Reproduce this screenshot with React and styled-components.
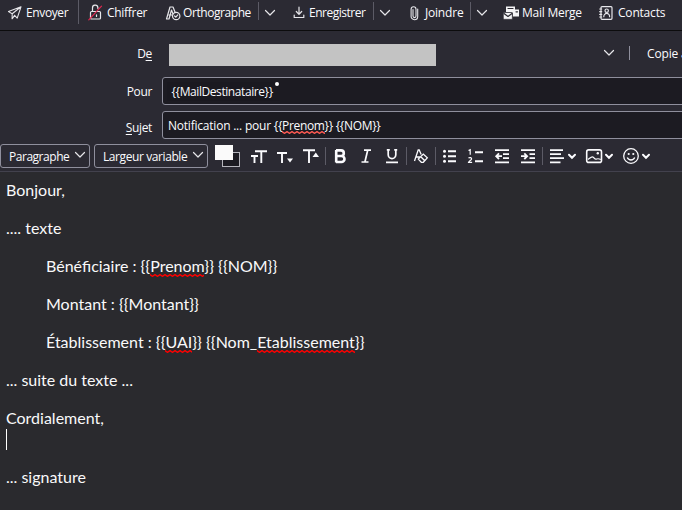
import React from "react";
import styled, { createGlobalStyle } from "styled-components";

const Global = createGlobalStyle`
  * { box-sizing: border-box; }
  body { margin: 0; overflow: hidden; background: #2a2a2e; }
`;

const Window = styled.div`
  width: 682px;
  height: 510px;
  overflow: hidden;
  display: flex;
  flex-direction: column;
  background: #2b2a33;
  color: #fbfbfe;
  font: 12px/16px "Open Sans", "Noto Sans", sans-serif;
  white-space: nowrap;
`;

const Toolbar = styled.div`
  height: 31px;
  flex: none;
  display: flex;
  align-items: flex-start;
  border-bottom: 1px solid #0c0c0d;
`;

const ToolButton = styled.div`
  flex: none;
  width: ${(p) => p.$w}px;
  height: 26px;
  padding-left: ${(p) => p.$pad}px;
  display: flex;
  align-items: center;
  gap: ${(p) => p.$gap || 4}px;
`;

const Label = styled.span`
  letter-spacing: ${(p) => p.$ls || 0}px;
`;

const Divider = styled.span`
  flex: none;
  width: 1px;
  height: ${(p) => p.$h}px;
  margin-top: ${(p) => p.$top || 0}px;
  background: ${(p) => p.$c || "#5c5b66"};
`;

const Glyph = styled.svg`
  flex: none;
  display: block;
  fill: none;
  stroke: #e6e6ea;
  stroke-width: 1.2;
  stroke-linecap: round;
  stroke-linejoin: round;
`;

const Headers = styled.div`
  height: 108px;
  flex: none;
  display: flex;
  flex-direction: column;
`;

const FieldRow = styled.div`
  display: flex;
  height: ${(p) => p.$h}px;
  align-items: flex-start;
`;

const FieldLabel = styled.div`
  width: 152px;
  flex: none;
  padding-top: ${(p) => p.$top}px;
  text-align: right;
  letter-spacing: -0.35px;
  u { text-underline-offset: 2px; }
`;

const Sender = styled.div`
  width: 267px;
  height: 22px;
  margin: 13px 167px 0 17px;
  flex: none;
  background: #c3c3c3;
`;

const SenderMenu = styled.div`
  flex: none;
  width: 26px;
  padding-top: 18px;
`;

const CopyLink = styled.div`
  flex: none;
  padding: 15px 0 0 17px;
  letter-spacing: -0.15px;
`;

const Field = styled.div`
  flex: none;
  width: 530px;
  height: 28px;
  margin-left: 10px;
  padding: ${(p) => p.$drop || 0}px 0 0 ${(p) => p.$pad}px;
  display: flex;
  align-items: center;
  background: #1c1b22;
  border: 1px solid #8f8f9d;
  border-radius: 3px;
`;

const Pill = styled.div`
  position: relative;
  width: 113px;
  height: 19px;
  padding-left: 4.5px;
  line-height: 19px;
  background: #1a1920;
  border-radius: 2px;
`;

const Dot = styled.i`
  position: absolute;
  right: 1px;
  top: 0;
  width: 4px;
  height: 4px;
  border-radius: 50%;
  background: #fff;
`;

const Misspelled = styled.span`
  padding-bottom: ${(p) => p.$drop || 0}px;
  background: url("data:image/svg+xml,%3Csvg xmlns='http://www.w3.org/2000/svg' width='5' height='3'%3E%3Cpath d='M-1 .1L0 .6L2.5 2.3L5 .6L6 .1' fill='none' stroke='${(p) => p.$c || "red"}' stroke-width='1.4'/%3E%3C/svg%3E") 0 100% / 5px 3px repeat-x;
`;

const FormatBar = styled.div`
  height: 33px;
  flex: none;
  display: flex;
  align-items: flex-start;
  padding-top: 5px;
  border-bottom: 1px solid #42414d;
`;

const Select = styled.div`
  flex: none;
  width: ${(p) => p.$w}px;
  height: 24px;
  margin-right: 4px;
  padding: 1px 3px 0 8px;
  display: flex;
  align-items: center;
  justify-content: space-between;
  border: 1px solid #8f8f9d;
  border-radius: 3px;
  svg { margin-bottom: 3px; }
`;

const FormatIcons = styled.svg`
  flex: none;
  display: block;
  width: 470px;
  height: 24px;
  margin-left: 2px;
`;

const Editor = styled.div`
  flex: 1;
  padding: 8px 6px;
  background: #2a2a2e;
  color: #f9f9fa;
  font: 16px/19px Lato, "Open Sans", sans-serif;
`;

const Paragraph = styled.p`
  margin: 0 0 19px ${(p) => (p.$indent ? 40 : 0)}px;
`;

const CaretLine = styled.div`
  height: 21px;
  margin: -17px 0 17px;
  border-left: 1px solid #fff;
`;

const Chevron = () => (
  <Glyph width="12" height="8" viewBox="0 0 12 8">
    <path d="M1.5 1.5L6 6l4.5-4.5" />
  </Glyph>
);

const SendIcon = () => (
  <Glyph width="16" height="16" viewBox="0 0 16 16">
    <path d="M14 1.8L1.5 6.6l3.7 2.2L14 1.8l-3.8 11.4-2.6-2.8M5.2 8.8l-.1 5 2.5-3.4" strokeWidth="1.1" />
  </Glyph>
);

const LockIcon = () => (
  <Glyph width="16" height="18" viewBox="0 0 16 18">
    <rect x="2.5" y="7.5" width="10" height="7.5" rx="1" />
    <path d="M4.5 7.5V4.2a2.7 2.7 0 0 1 5.4-.6v1M8.5 10.8v1.6" />
    <path d="M.8 15.8L13.5 2.2" stroke="#e22850" />
  </Glyph>
);

const SpellIcon = () => (
  <Glyph width="16" height="16" viewBox="0 0 16 16">
    <path d="M1.5 14L5 2h3l2 5M4 14l2.5-9L8 9M4 10h3M1.5 14H4" />
    <circle cx="11.2" cy="11" r="3.7" />
    <path d="M9.6 11l1.2 1.2 2-2.3" />
  </Glyph>
);

const SaveIcon = () => (
  <Glyph width="12" height="14" viewBox="0 0 12 14">
    <path d="M6 1.2V8M3.3 5.5L6 8.3l2.7-2.8M1.2 9v2.5h9.6V9" />
  </Glyph>
);

const ClipIcon = () => (
  <Glyph width="9" height="16" viewBox="0 0 9 16">
    <path d="M3 4.5v6.6a1.5 1.5 0 0 0 3 0V4.2a2.4 2.4 0 0 0-4.9 0v7.2a3.3 3.3 0 0 0 6.6 0V4" strokeWidth="1.1" />
  </Glyph>
);

const MergeIcon = () => (
  <Glyph width="17" height="16" viewBox="0 0 17 16">
    <path d="M3 1.5h9v3h4v7H10V8.5L8 7H3z" fill="#f4f4f6" stroke="none" />
    <path d="M5 3.5h5M13 6.8h1.5" stroke="#2b2a33" />
    <path d="M.5 7.5h8.8v6.8H.5z" fill="#f4f4f6" stroke="#2b2a33" strokeWidth=".6" />
    <path d="M1 8.5l4 3 4-3" stroke="#2b2a33" />
  </Glyph>
);

const ContactsIcon = () => (
  <Glyph width="14" height="16" viewBox="0 0 14 16">
    <rect x="2" y="1.7" width="11" height="12.6" rx="1" />
    <path d="M.7 4h2M.7 6.7h2M.7 9.4h2M.7 12h2" />
    <circle cx="7.7" cy="5.7" r="1.7" />
    <path d="M4.8 11.7c0-2 1.2-3.2 2.9-3.2s2.9 1.2 2.9 3.2M6.8 8l-.2 1M8.7 8l.2 1" />
  </Glyph>
);

const Squiggle = ({ children, color, drop }) => (
  <Misspelled $c={color} $drop={drop}>{children}</Misspelled>
);

const menuChevron = "l3 3 3-3";

/* Formatting icons share one strip that starts just left of the colour swatches. */
const FormatStrip = () => (
  <FormatIcons viewBox="214 144 470 24" fill="none" stroke="#fbfbfe" strokeWidth="1.6">
    <rect x="222.5" y="152.5" width="17" height="14" fill="#1c1b22" stroke="#b5b5bc" strokeWidth="1" />
    <rect x="215" y="145" width="18" height="15" fill="#fafafa" stroke="none" />
    <path d="M255 151.2h12M261.3 151v12M251 156h7M254.5 156v7" strokeWidth="1.9" />
    <path d="M277 153h10M282 153v10" strokeWidth="1.9" />
    <path d="M287 158.5h6l-3 4z" fill="#fbfbfe" stroke="none" />
    <path d="M303 150.2h12M309 150v13" strokeWidth="1.9" />
    <path d="M312.5 157h6.5l-3.2-4.5z" fill="#fbfbfe" stroke="none" />
    <path d="M325.5 147v18M406.5 147v18M435.5 147v18M542.5 147v18" stroke="#5c5b66" strokeWidth="1" />
    <path d="M336 150.4h5a2.6 2.6 0 0 1 0 5.6h-5m0 0h5.5a3 3 0 0 1 0 6H336M336.2 150v12.5" strokeWidth="2.6" />
    <path d="M364 150.2h7M361.5 162h7M367.7 150.2l-2.8 11.8" strokeWidth="1.7" />
    <path d="M388.2 149.5v5.3a3.8 3.8 0 0 0 7.6 0v-5.3M386 162.3h12M386.8 149.8h3M394.2 149.8h3" strokeWidth="1.7" />
    <path d="M414.5 161l3.7-11h1l2 4.5M416 157h4M421.3 162.3l-3-3.2 5-5 4 3.8-4 4.4zM420.8 156.7l4 4" strokeWidth="1.3" />
    <path d="M448 151.2h8M448 156.2h8M448 161.3h8" strokeWidth="1.9" />
    <g fill="#fbfbfe" stroke="none">
      <circle cx="444.5" cy="151.2" r="1.5" />
      <circle cx="444.5" cy="156.2" r="1.5" />
      <circle cx="444.5" cy="161.3" r="1.5" />
    </g>
    <path d="M475 152.2h8M475 161.2h8" strokeWidth="1.9" />
    <path d="M468.5 150.5l1.7-.8v5M468.5 158.2c1-1.2 3.3-.6 3.1.8 0 1-3 2.5-3.1 3.4h3.6" strokeWidth="1.2" />
    <path d="M495 150.2h14M503 154.2h6M503 158.2h6M495 162.3h14M496.5 156.2h5.5M499 153.4l-2.8 2.8 2.8 2.8" strokeWidth="1.8" />
    <path d="M521 150.2h14M529.5 154.2h5.5M529.5 158.2h5.5M521 162.3h14M521 156.2h6M524.3 153.4l2.8 2.8-2.8 2.8" strokeWidth="1.8" />
    <path d="M550 150.2h13M550 154.2h11M550 158.2h14M550 162.3h10.5" strokeWidth="1.8" />
    <path d={`M569 154.8${menuChevron}M606 154.8${menuChevron}M643 154.8${menuChevron}`} strokeWidth="2" strokeLinecap="round" />
    <rect x="586.7" y="149.9" width="14.8" height="12.5" rx="2" />
    <path d="M588 159.5c2-1.5 3-2.6 4.3-2.6s2.2 2.2 3.5 2.2 2-1.2 5 .5" strokeWidth="1.1" />
    <circle cx="597.8" cy="153.2" r="1.2" fill="#fbfbfe" stroke="none" />
    <circle cx="631" cy="156" r="7.3" strokeWidth="1.3" />
    <path d="M627.3 157.6c1.3 3.2 6.1 3.2 7.4 0" strokeWidth="1.3" />
    <circle cx="628.7" cy="154" r="1.1" fill="#fbfbfe" stroke="none" />
    <circle cx="633.3" cy="154" r="1.1" fill="#fbfbfe" stroke="none" />
  </FormatIcons>
);

export default function App() {
  return (
    <>
      <Global />
      <Window>
        <Toolbar>
          <ToolButton $w={78} $pad={7} $gap={3}><SendIcon /><Label $ls={-0.38}>Envoyer</Label></ToolButton>
          <Divider $h={24} />
          <ToolButton $w={86} $pad={9} $gap={3}><LockIcon /><Label $ls={-0.3}>Chiffrer</Label></ToolButton>
          <ToolButton $w={93} $pad={0} $gap={2}><SpellIcon /><Label $ls={-0.43}>Orthographe</Label></ToolButton>
          <Divider $h={18} $top={2} />
          <ToolButton $w={34} $pad={5}><Chevron /></ToolButton>
          <ToolButton $w={80} $pad={0} $gap={4}><SaveIcon /><Label $ls={-0.48}>Enregistrer</Label></ToolButton>
          <Divider $h={18} $top={2} />
          <ToolButton $w={36} $pad={5}><Chevron /></ToolButton>
          <ToolButton $w={60} $pad={0} $gap={6}><ClipIcon /><Label $ls={-0.2}>Joindre</Label></ToolButton>
          <Divider $h={18} $top={2} />
          <ToolButton $w={31} $pad={5}><Chevron /></ToolButton>
          <ToolButton $w={97} $pad={1} $gap={2}><MergeIcon /><Label $ls={-0.25}>Mail Merge</Label></ToolButton>
          <ToolButton $w={83} $pad={0} $gap={5}><ContactsIcon /><Label $ls={-0.2}>Contacts</Label></ToolButton>
        </Toolbar>
        <Headers>
          <FieldRow $h={46}>
            <FieldLabel $top={15}>D<u>e</u></FieldLabel>
            <Sender />
            <SenderMenu><Chevron /></SenderMenu>
            <Divider $h={14} $top={15} $c="#8f8f9d" />
            <CopyLink>Copie à</CopyLink>
          </FieldRow>
          <FieldRow $h={34}>
            <FieldLabel $top={7}>Pour</FieldLabel>
            <Field $pad={4}>
              <Pill><Label $ls={-0.42}>{"{{MailDestinataire}}"}</Label><Dot /></Pill>
            </Field>
          </FieldRow>
          <FieldRow $h={28}>
            <FieldLabel $top={9}><u>S</u>ujet</FieldLabel>
            <Field $pad={5} $drop={2}>
              <Label $ls={-0.22}>Notification ... pour&nbsp;</Label>
              <Label $ls={-0.34}>{"{{"}<Squiggle color="%23ff5a52">Prenom</Squiggle>{"}} {{NOM}}"}</Label>
            </Field>
          </FieldRow>
        </Headers>
        <FormatBar>
          <Select $w={90}><Label $ls={-0.47}>Paragraphe</Label><Chevron /></Select>
          <Select $w={114}><Label $ls={-0.41}>Largeur variable</Label><Chevron /></Select>
          <FormatStrip />
        </FormatBar>
        <Editor>
          <Paragraph>Bonjour,</Paragraph>
          <Paragraph>.... texte</Paragraph>
          <Paragraph $indent>Bénéficiaire : {"{{"}<Squiggle drop={2}>Prenom</Squiggle>{"}} {{NOM}}"}</Paragraph>
          <Paragraph $indent>Montant : {"{{Montant}}"}</Paragraph>
          <Paragraph $indent>Établissement : {"{{"}<Squiggle drop={2}>UAI</Squiggle>{"}} {{Nom_"}<Squiggle drop={2}>Etablissement</Squiggle>{"}}"}</Paragraph>
          <Paragraph>... suite du texte ...</Paragraph>
          <Paragraph>Cordialement,</Paragraph>
          <CaretLine />
          <Paragraph>... signature</Paragraph>
        </Editor>
      </Window>
    </>
  );
}
